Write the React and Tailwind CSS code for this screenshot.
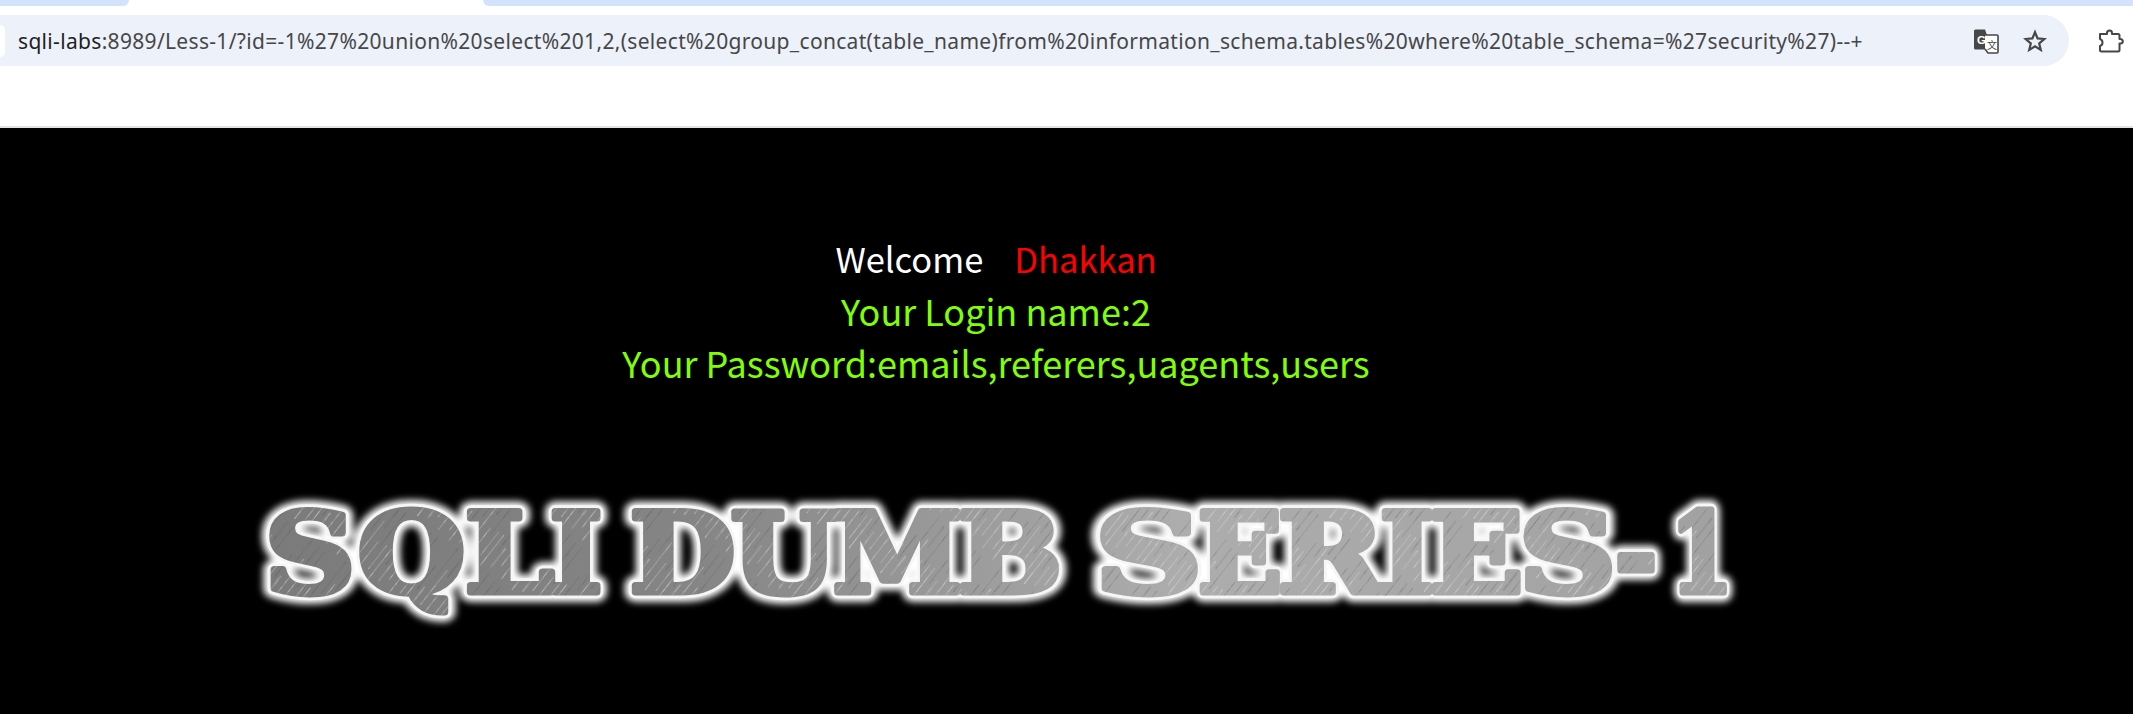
const LETTERS = [
  ["S", 267, 353], ["Q", 360, 463], ["L", 467, 552], ["I", 552, 600],
  ["D", 632, 733], ["U", 733, 835], ["M", 835, 960], ["B", 960, 1060],
  ["S", 1097, 1200], ["E", 1200, 1280], ["R", 1280, 1382], ["I", 1382, 1432],
  ["E", 1432, 1521], ["S", 1521, 1614], ["-", 1617, 1655], ["1", 1672, 1731],
];
const OX = 240;
const BASE = 113;
const INSET = -2;

function Glyphs({ ...props }) {
  return (
    <g fontFamily="'DejaVu Serif', serif" fontWeight="700" fontSize="110" {...props}>
      {LETTERS.map(([c, a, b], i) => (
        <text key={i} x={a - OX + INSET} y={BASE} textLength={b - a - INSET * 2} lengthAdjust="spacingAndGlyphs">{c}</text>
      ))}
    </g>
  );
}

function Logo() {
  const streaks = [
    [0, 2, 38, 1, "#e4e4e4", 0.32], [22, 7, 30, 1, "#444444", 0.16], [5, 11, 24, 2, "#d6d6d6", 0.18],
    [40, 14, 40, 1, "#444444", 0.14], [12, 19, 44, 1, "#e8e8e8", 0.26], [50, 23, 26, 2, "#4a4a4a", 0.1],
    [2, 27, 34, 1, "#e0e0e0", 0.3], [30, 31, 46, 1, "#404040", 0.15], [8, 36, 30, 1, "#ececec", 0.22],
  ];
  return (
    <svg width="1520" height="150" viewBox="0 0 1520 150" className="block ml-[240px] mt-[90.500px]">
      <defs>
        <linearGradient id="metal" gradientUnits="userSpaceOnUse" x1="0" x2="1520" y1="0" y2="0">
          <stop offset="0" stopColor="#7a7a7a" />
          <stop offset="0.3" stopColor="#858585" />
          <stop offset="0.62" stopColor="#adadad" />
          <stop offset="1" stopColor="#a0a0a0" />
        </linearGradient>
        <pattern id="hatch" width="80" height="40" patternUnits="userSpaceOnUse" patternTransform="rotate(-52)">
          {streaks.map(([x, y, w, h, f, o], i) => (
            <rect key={i} x={x} y={y} width={w} height={h} fill={f} opacity={o} />
          ))}
        </pattern>
        <filter id="glow" x="-5%" y="-30%" width="110%" height="160%">
          <feGaussianBlur stdDeviation="3.500" />
        </filter>
      </defs>
      <Glyphs fill="#ffffff" stroke="#ffffff" strokeWidth="20" strokeLinejoin="round" filter="url(#glow)" />
      <Glyphs fill="#ffffff" stroke="#f6f6f6" strokeWidth="12.500" strokeLinejoin="round" />
      <Glyphs fill="url(#metal)" stroke="url(#metal)" strokeWidth="7" strokeLinejoin="round" />
      <Glyphs fill="url(#hatch)" stroke="url(#hatch)" strokeWidth="7" strokeLinejoin="round" />
    </svg>
  );
}

function TranslateIcon() {
  return (
    <svg width="26" height="26" viewBox="0 0 26 26" className="block">
      <path d="M2.500 1.500h9.500l7 20H2.500a1.500 1.500 0 0 1-1.500-1.500V3a1.500 1.500 0 0 1 1.500-1.500z" fill="#474747" />
      <path d="M12 7h12a1 1 0 0 1 1 1v16a1 1 0 0 1-1 1H15l-3-4" fill="#ffffff" stroke="#474747" strokeWidth="1.600" />
      <text x="4" y="15.500" fontSize="11.500" fontWeight="700" fill="#ffffff" fontFamily="'Liberation Sans', sans-serif">G</text>
      <text x="14" y="21" fontSize="10" fill="#474747" fontFamily="'Noto Sans CJK SC', sans-serif">文</text>
    </svg>
  );
}

function StarIcon() {
  return (
    <svg width="24" height="24" viewBox="0 0 24 24" className="block" fill="none" stroke="#474747" strokeWidth="2.200" strokeLinejoin="miter">
      <path d="M12 3.200l2.600 6.200 6.700.6-5.100 4.400 1.600 6.600L12 17.400l-5.800 3.600 1.600-6.600-5.100-4.400 6.700-.6z" />
    </svg>
  );
}

function ExtensionIcon() {
  return (
    <svg width="26" height="26" viewBox="0 0 26 26" className="block" fill="none" stroke="#474747" strokeWidth="2" strokeLinejoin="round">
      <path d="M2 6h7V5a2.500 2.500 0 0 1 5 0v1h6a1.500 1.500 0 0 1 1.500 1.500V11h1a2.300 2.300 0 0 1 0 4.600h-1V22a1.500 1.500 0 0 1-1.500 1.500H3.500A1.500 1.500 0 0 1 2 22v-4a3.500 3.500 0 0 0 2.500-3.500A3.500 3.500 0 0 0 2 11z" />
    </svg>
  );
}

export default function App() {
  return (
    <div className="w-[2133px] h-[714px] overflow-hidden bg-black flex flex-col">
      <header className="h-[128px] shrink-0 bg-white border-b-2 border-[#e3e3e3] flex flex-col">
        <div className="h-[6px] flex justify-between">
          <div className="w-[129px] bg-[#d3e3fd] rounded-br-[8px]" />
          <div className="w-[1650px] bg-[#d3e3fd] rounded-bl-[8px]" />
        </div>
        <div className="mt-[9px] flex items-center">
          <div className="w-[2069px] h-[51px] bg-[#ecf1fa] rounded-r-full flex items-center">
            <div className="w-[5px] h-[32px] bg-white rounded-r-full" />
            <div className="ml-[13px] flex-1 font-['Noto_Sans',sans-serif] text-[21px] tracking-[0.32px] leading-[26px] text-[#474747] whitespace-nowrap">
              <span className="text-[#1f1f1f]">sqli-labs</span>:8989/Less-1/?id=-1%27%20union%20select%201,2,(select%20group_concat(table_name)from%20information_schema.tables%20where%20table_schema=%27security%27)--+
            </div>
            <div className="flex items-center gap-[24px] mr-[22px]">
              <TranslateIcon />
              <StarIcon />
            </div>
          </div>
          <div className="ml-[29px]">
            <ExtensionIcon />
          </div>
        </div>
      </header>
      <main className="flex-1 bg-black">
        <div className="w-[1992px] pt-[105px] text-center font-['Noto_Sans_CJK_SC',sans-serif] text-[36px] leading-[52.500px] text-[#80ff00]">
          <div className="text-[34.500px] leading-[50.500px]">
            <span className="text-white">Welcome</span>
            <span className="text-[#ff0000] ml-[31px]">Dhakkan</span>
          </div>
          <div>Your Login name:2</div>
          <div>Your Password:emails,referers,uagents,users</div>
        </div>
        <Logo />
      </main>
    </div>
  );
}
